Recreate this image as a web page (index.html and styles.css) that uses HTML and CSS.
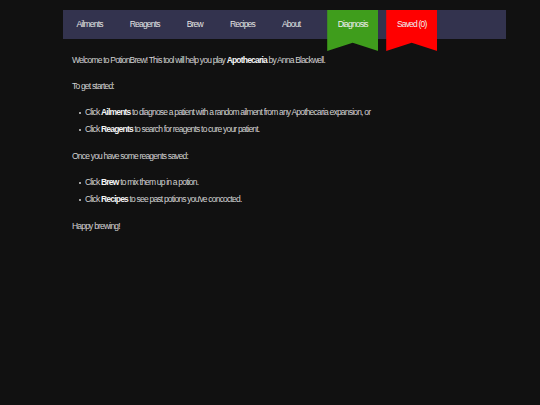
FILE: index.html
```html
<!DOCTYPE html>
<html lang="en">
<head>
    <meta charset="UTF-8">
    <meta name="viewport" content="width=device-width, initial-scale=1.0">
    <title>PotionBrew</title>
    <link rel="stylesheet" href="styles.css">
</head>
<body>
    <div id="app">
        <nav id="menu">
            <a class="item" href="#">Ailments</a>
            <a class="item" href="#">Reagents</a>
            <a class="item" href="#">Brew</a>
            <a class="item" href="#">Recipes</a>
            <a class="item" href="#">About</a>
            <a class="banner diagnosis" href="#">Diagnosis</a>
            <a class="banner saved" href="#">Saved (0)</a>
        </nav>
        <div id="content">
            <p>Welcome to PotionBrew! This tool will help you play <b>Apothecaria</b> by Anna Blackwell.</p>
            <p>To get started:</p>
            <ul>
                <li>Click <b>Ailments</b> to diagnose a patient with a random ailment from any Apothecaria expansion, or</li>
                <li>Click <b>Reagents</b> to search for reagents to cure your patient.</li>
            </ul>
            <p>Once you have some reagents saved:</p>
            <ul>
                <li>Click <b>Brew</b> to mix them up in a potion.</li>
                <li>Click <b>Recipes</b> to see past potions you've concocted.</li>
            </ul>
            <p>Happy brewing!</p>
        </div>
    </div>
</body>
</html>
```

FILE: styles.css
```css
body, html {
    margin: 0;
    padding: 0;
    background-color: #111111;
    font-family: 'Liberation Sans', Arial, sans-serif;
    font-size: 8.5px;
    letter-spacing: -0.8px;
    color: #d2d2d2;
}
#app {
    width: 443px;
    margin: 10px 0 0 63px;
}
#menu {
    display: flex;
    height: 29px;
    background-color: #33334e;
}
#menu a {
    color: #e4e4e4;
    text-decoration: none;
    line-height: 29px;
}
#menu .item {
    padding: 0 13.5px;
}
#menu .banner {
    width: 51px;
    height: 41px;
    text-align: center;
    color: #f0f0f0;
    clip-path: polygon(0 0, 100% 0, 100% 100%, 50% 80%, 0 100%);
}
.diagnosis {
    background-color: #3f9d1c;
    margin-left: 13.5px;
}
.saved {
    background-color: #ff0000;
    margin-left: 8px;
}
#content {
    padding: 3px 9px 0;
}
#content p {
    margin: 10px 0;
    line-height: 16px;
}
#content ul {
    margin: 10px 0;
    padding-left: 13px;
    list-style: none;
}
#content li {
    line-height: 17px;
}
#content li::before {
    content: "";
    display: inline-block;
    width: 2.5px;
    height: 2.5px;
    margin: 0 4px 0 -6.5px;
    border-radius: 50%;
    background-color: #d2d2d2;
    vertical-align: middle;
}
#content b {
    color: #f4f4f4;
}
```
